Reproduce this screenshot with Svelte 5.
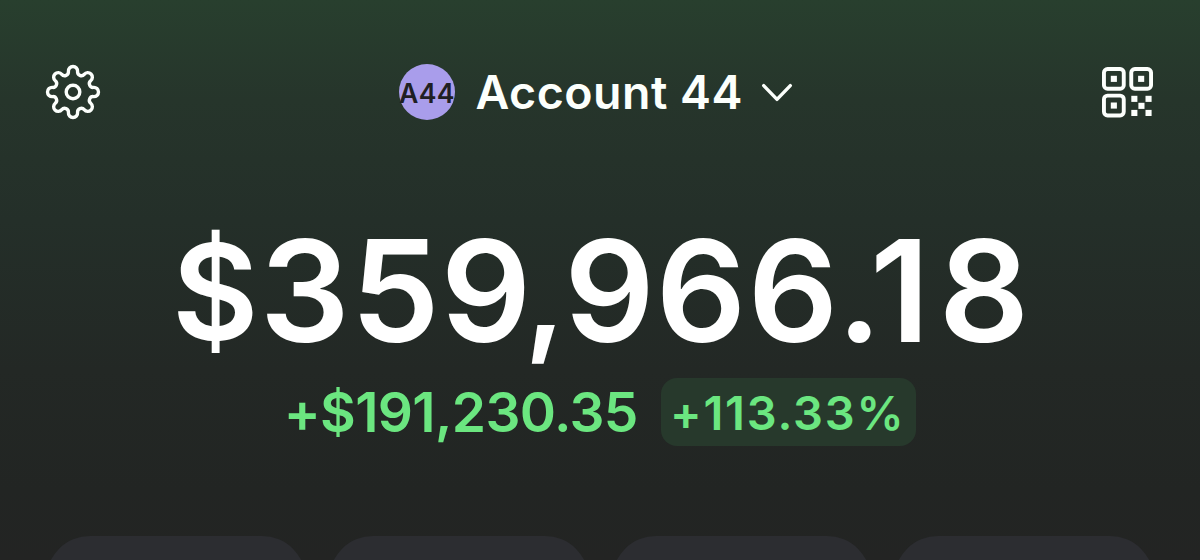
<script>
  const lobes = 8;
  const gearPath = (() => {
    const a = 4.6, R1 = 20.9, v = 18;
    const step = Math.PI / lobes;
    const c = Math.cos(step);
    const b = (v * v + R1 * R1 - 2 * R1 * c * v - a * a) / (2 * a - 2 * v + 2 * R1 * c);
    const R2 = v + b;
    const at = (r, t) => [r * Math.sin(t), -r * Math.cos(t)];
    const join = (lobe, valley) => {
      const p = at(R1, lobe), q = at(R2, valley), k = a / (a + b);
      return `${(p[0] + (q[0] - p[0]) * k).toFixed(2)} ${(p[1] + (q[1] - p[1]) * k).toFixed(2)}`;
    };
    let d = `M${join(0, -step)}`;
    for (let i = 0; i < lobes; i++) {
      const t = i * 2 * step;
      d += `A${a} ${a} 0 1 1 ${join(t, t + step)}`;
      d += `A${b.toFixed(2)} ${b.toFixed(2)} 0 0 0 ${join(t + 2 * step, t + step)}`;
    }
    return d + 'Z';
  })();
  const finders = [[0, 0], [27.3, 0], [0, 26.7]];
  const modules = [[29.3, 28.8], [43.5, 28.8], [36.4, 35.8], [29.3, 42.9], [43.5, 42.9]];
  const actions = [0, 1, 2, 3];
  // Each glyph of the balance with the tracking that follows it, in pixels.
  const glyphs = [
    ['$', -4], ['3', 1], ['5', 1], ['9', -7], [',', -5], ['9', 1],
    ['6', 1.5], ['6', -1.5], ['.', -12], ['1', 9], ['8', 0]
  ];
</script>

<main>
  <header>
    <button aria-label="Settings">
      <svg width="56" height="56" viewBox="-28 -28 56 56" fill="none" stroke="#fcfffc" stroke-width="3.4">
        <path d={gearPath} />
        <circle r="6.8" />
      </svg>
    </button>
    <div class="account">
      <span class="avatar"><span>A44</span></span>
      <span class="name">Account 44</span>
      <svg width="32" height="20" viewBox="0 0 32 20" fill="none" stroke="#fcfffc" stroke-width="3.4" stroke-linecap="round" stroke-linejoin="round">
        <path d="M2.7 3.6L16 17.4L29.3 3.6" />
      </svg>
    </div>
    <button aria-label="Scan">
      <svg width="51" height="51" viewBox="0 0 51 51" fill="#fcfffc">
        {#each finders as [x, y]}
          <rect x={x + 1.95} y={y + 1.95} width="19.8" height="19.8" rx="3.6" fill="none" stroke="#fcfffc" stroke-width="3.9" />
          <rect x={x + 8.8} y={y + 8.8} width="6.1" height="6.1" />
        {/each}
        {#each modules as [x, y]}
          <rect {x} {y} width="6.1" height="6.1" />
        {/each}
      </svg>
    </button>
  </header>
  <div class="balance">
    {#each glyphs as [ch, space]}<span class:dollar={ch === '$'} class:comma={ch === ','} style="letter-spacing: {space}px">{ch}</span>{/each}
  </div>
  <div class="change">
    <span class="gain">+$191,230.35</span>
    <span class="badge"><span>+113.33%</span></span>
  </div>
  <div class="actions">
    {#each actions as a (a)}<div class="action"></div>{/each}
  </div>
</main>

<style>
  :global(body) { margin: 0; }
  main {
    box-sizing: border-box;
    width: 1200px;
    height: 560px;
    overflow: hidden;
    display: flex;
    flex-direction: column;
    font-family: Inter, "Liberation Sans", sans-serif;
    background: linear-gradient(#283f2e 0, #26352b 100px, #242f29 220px, #232825 370px, #222523 490px, #232423 560px);
  }
  header {
    display: grid;
    grid-template-columns: 1fr auto 1fr;
    align-items: center;
    height: 56px;
    padding: 64px 47px 0 44.5px;
  }
  button {
    display: flex;
    padding: 0;
    border: 0;
    background: none;
  }
  button:last-child { justify-self: end; }
  .account {
    display: flex;
    align-items: center;
    margin-right: 6px;
    color: #fcfffc;
  }
  .avatar {
    box-sizing: border-box;
    width: 56px;
    height: 56px;
    padding-top: 1px;
    border-radius: 50%;
    background: #a99deb;
    color: #1f1f24;
    display: flex;
    align-items: center;
    justify-content: center;
    font-size: 26.6px;
    font-weight: 560;
    letter-spacing: 0.3px;
  }
  .name {
    margin: 0 17.5px 0 20.5px;
    font-size: 46.5px;
    line-height: 56px;
    font-weight: 600;
    letter-spacing: 0.5px;
    white-space: nowrap;
  }
  .balance {
    display: flex;
    justify-content: center;
    height: 170px;
    margin-top: 86px;
    padding-left: 1px;
    line-height: 170px;
    font-size: 141.5px;
    font-weight: 600;
    color: #fff;
  }
  .dollar { transform: translateY(-2px) scale(0.94); transform-origin: 0 136px; }
  .comma { transform: translateY(-3px) scale(0.93); transform-origin: 0 136px; }
  .change {
    display: flex;
    align-items: center;
    justify-content: center;
    height: 68px;
    margin-top: 2px;
    color: #6be680;
    white-space: nowrap;
  }
  .gain {
    margin-right: 23.5px;
    font-size: 55px;
    font-weight: 560;
    letter-spacing: -0.65px;
  }
  .badge {
    box-sizing: border-box;
    width: 255px;
    height: 68px;
    padding-right: 2px;
    border-radius: 16px;
    background: #27392c;
    display: flex;
    align-items: center;
    justify-content: center;
    font-size: 47px;
    font-weight: 570;
    letter-spacing: 1.8px;
  }
  .actions {
    display: grid;
    grid-template-columns: repeat(4, 1fr);
    gap: 23px;
    margin-top: 90px;
    padding: 0 46px;
  }
  .action {
    height: 200px;
    border-radius: 44px;
    background: #2c2d31;
  }
</style>
